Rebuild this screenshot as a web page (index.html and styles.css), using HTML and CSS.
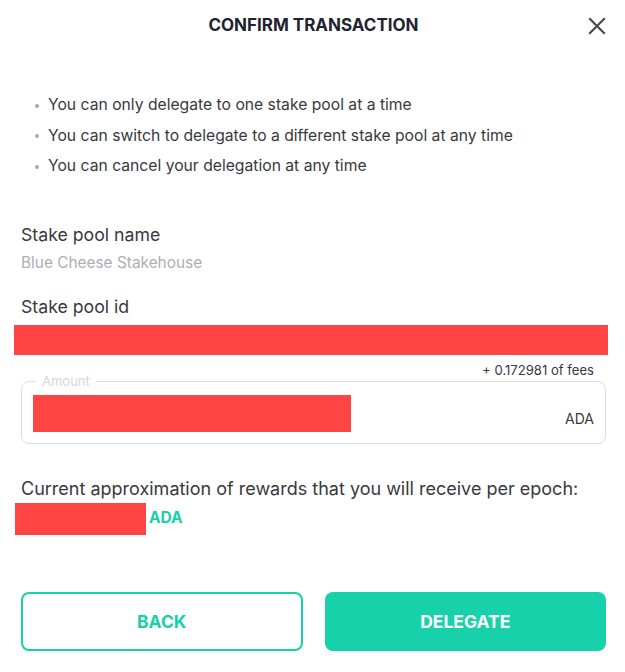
FILE: index.html
```html
<!DOCTYPE html>
<html lang="en">
<head>
    <meta charset="UTF-8">
    <meta name="viewport" content="width=device-width, initial-scale=1.0">
    <title>Confirm Transaction</title>
    <link rel="stylesheet" href="styles.css">
</head>
<body>
    <div class="dialog">
        <div class="dialog-header">
            <span></span>
            <h1 class="dialog-title">CONFIRM TRANSACTION</h1>
            <button class="close-btn" aria-label="Close">
                <svg width="18" height="18" viewBox="0 0 18 18">
                    <path d="M2 2 L16 16 M16 2 L2 16" stroke="#4a4a4a" stroke-width="2.2" stroke-linecap="square" fill="none"/>
                </svg>
            </button>
        </div>

        <ul class="notes">
            <li>You can only delegate to one stake pool at a time</li>
            <li>You can switch to delegate to a different stake pool at any time</li>
            <li>You can cancel your delegation at any time</li>
        </ul>

        <div class="field-label pool-name">Stake pool name</div>
        <div class="field-value">Blue Cheese Stakehouse</div>

        <div class="field-label pool-id">Stake pool id</div>
        <div class="redacted redacted-id"></div>

        <div class="fees">+ 0.172981 of fees</div>
        <fieldset class="amount">
            <legend>Amount</legend>
            <div class="amount-row">
                <div class="redacted redacted-amount"></div>
                <span class="currency">ADA</span>
            </div>
        </fieldset>

        <p class="rewards-text">Current approximation of rewards that you will receive per epoch:</p>
        <div class="rewards-row">
            <div class="redacted redacted-rewards"></div>
            <span class="rewards-unit">ADA</span>
        </div>

        <div class="actions">
            <button class="btn btn-outline">BACK</button>
            <button class="btn btn-primary">DELEGATE</button>
        </div>
    </div>
</body>
</html>
```

FILE: styles.css
```css
body {
    margin: 0;
    font-family: 'Inter', sans-serif;
    color: #38393d;
    background: #ffffff;
}

.dialog {
    padding: 15px 19px 0 21px;
}

.dialog-header {
    display: grid;
    grid-template-columns: 1fr auto 1fr;
}

.dialog-title {
    margin: 0;
    font-size: 17px;
    line-height: 20px;
    font-weight: 700;
    color: #20232f;
}

.close-btn {
    justify-self: end;
    align-self: start;
    margin-top: 2px;
    padding: 0;
    border: none;
    background: none;
    width: 18px;
    height: 18px;
    cursor: pointer;
}

.close-btn svg {
    display: block;
}

.notes {
    list-style: none;
    margin: 55px 0 0;
    padding: 0 0 0 14px;
}

.notes li {
    font-size: 15.7px;
    line-height: 30.5px;
}

.notes li::before {
    content: "";
    display: inline-block;
    width: 4px;
    height: 4px;
    border-radius: 50%;
    background: #a7a9b4;
    vertical-align: middle;
    margin-right: 9px;
}

.field-label {
    font-size: 17.7px;
    line-height: 22px;
}

.pool-name {
    margin-top: 42px;
}

.field-value {
    margin-top: 7px;
    font-size: 15.4px;
    line-height: 20px;
    color: #adaeb6;
}

.pool-id {
    margin-top: 23px;
}

.redacted {
    background: #ff4444;
}

.redacted-id {
    height: 30px;
    margin: 7px -2px 0 -7px;
}

.fees {
    margin-top: 7px;
    padding-right: 12px;
    text-align: right;
    font-size: 13.1px;
    line-height: 16px;
}

/* legend box overlaps the fees line so the border sits at 381 */
.amount {
    margin: -3px 0 0;
    padding: 0 11px 11px;
    border: 1px solid #dcdde4;
    border-radius: 8px;
}

.amount legend {
    margin-left: 3px;
    padding: 0 6px;
    font-size: 13px;
    line-height: 13px;
    color: #d3d6df;
}

.amount-row {
    display: flex;
    justify-content: space-between;
    align-items: flex-end;
    padding-top: 7px;
}

.redacted-amount {
    width: 318px;
    height: 37px;
}

.currency {
    font-size: 14px;
    line-height: 20px;
    padding-bottom: 3px;
}

.rewards-text {
    margin: 33px 0 0;
    font-size: 18px;
    line-height: 24px;
}

.rewards-row {
    display: flex;
    align-items: flex-start;
    margin: 2px 0 0 -6px;
}

.redacted-rewards {
    width: 131px;
    height: 32px;
}

.rewards-unit {
    margin: 3px 0 0 3px;
    font-size: 15.5px;
    line-height: 24px;
    font-weight: 700;
    color: #17d1aa;
}

.actions {
    display: grid;
    grid-template-columns: 1fr 1fr;
    gap: 22px;
    margin-top: 57px;
}

.btn {
    height: 59px;
    border-radius: 8px;
    font-family: 'Inter', sans-serif;
    font-size: 17.5px;
    font-weight: 700;
    cursor: pointer;
}

.btn-outline {
    background: #ffffff;
    border: 2px solid #17d1aa;
    color: #17d1aa;
}

.btn-primary {
    background: #17d1aa;
    border: none;
    color: #ffffff;
}
```
